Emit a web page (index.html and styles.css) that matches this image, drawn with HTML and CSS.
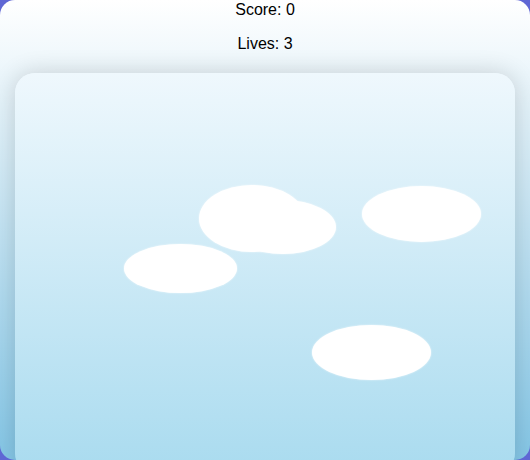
FILE: index.html
```html
<!DOCTYPE html>
<html>
<head>
<meta charset="utf-8">
<link rel="stylesheet" href="styles.css">
</head>
<body>
<div class="container">
  <div class="score">Score: 0</div>
  <div class="lives">Lives: 3</div>
  <div class="game">
    <div class="cloud c1"></div>
    <div class="cloud c2"></div>
    <div class="cloud c3"></div>
    <div class="cloud c4"></div>
    <div class="cloud c5"></div>
  </div>
</div>
</body>
</html>
```
FILE: styles.css
```css
html, body {
  margin: 0;
  padding: 0;
}
body {
  background: #5f67d4;
  font-family: "Liberation Sans", Arial, sans-serif;
  font-size: 16px;
  color: #000;
}
.container {
  width: 530px;
  height: 460px;
  border-radius: 15px;
  overflow: hidden;
  background: linear-gradient(180deg, #ffffff 0%, #84c6e6 100%);
  display: flex;
  flex-direction: column;
  align-items: center;
  padding-top: 1px;
  box-sizing: border-box;
}
.score, .lives {
  line-height: 18px;
  text-align: center;
}
.lives {
  margin-top: 16px;
}
.game {
  position: relative;
  flex: none;
  width: 500px;
  height: 400px;
  margin-top: 20px;
  border-radius: 20px;
  background: linear-gradient(180deg, #eff8fd 0%, #a9dbef 100%);
  box-shadow: 0 0 25px rgba(0, 0, 0, 0.16);
}
.cloud {
  position: absolute;
  background: #fff;
  border-radius: 50%;
  box-shadow: 0 0 2px rgba(255, 255, 255, 0.8);
}
.c1 { left: 109px; top: 171px; width: 113px; height: 49px; }
.c2 { left: 184px; top: 112px; width: 106px; height: 67px; }
.c3 { left: 215px; top: 127px; width: 106px; height: 54px; }
.c4 { left: 347px; top: 113px; width: 119px; height: 56px; }
.c5 { left: 297px; top: 252px; width: 119px; height: 55px; }
```
